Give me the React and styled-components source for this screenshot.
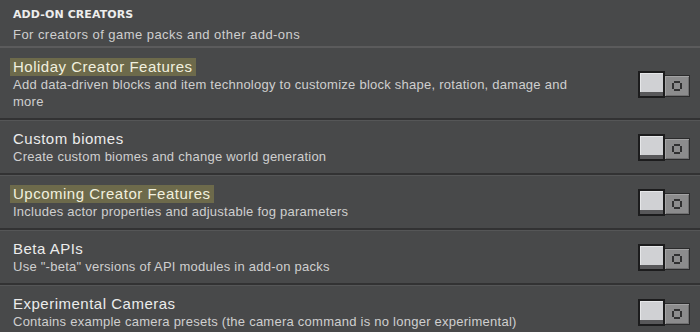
import React from "react";
import styled, { createGlobalStyle } from "styled-components";

const Global = createGlobalStyle`
  html, body { margin: 0; padding: 0; background: #48494a; }
  body { font-family: "Liberation Sans", Arial, sans-serif; }
`;

const Page = styled.div`
  width: 700px;
  height: 332px;
  overflow: hidden;
  background: #48494a;
  color: #e4e4e4;
`;

const Header = styled.header`
  padding: 6px 13px 3px;
  border-bottom: 2px solid #5b5b5c;
`;

const SectionTitle = styled.h2`
  margin: 0;
  font-family: "DejaVu Sans", sans-serif;
  font-weight: 700;
  font-size: 11px;
  letter-spacing: 0.1px;
  line-height: 17px;
  color: #ededed;
`;

const SectionSub = styled.p`
  margin: 3px 0 0;
  font-size: 13px;
  letter-spacing: 0.45px;
  line-height: 17px;
  color: #cfcfcf;
`;

const Row = styled.div`
  display: flex;
  align-items: center;
  padding: 10px 10px 8px 13px;
  border-top: ${(p) => (p.$first ? "none" : "2px solid #323233")};
  box-shadow: ${(p) => (p.$first ? "none" : "inset 0 1px 0 #555657")};
`;

const Text = styled.div`
  flex: 1;
  min-width: 0;
  padding-right: 42px;
`;

const Title = styled.span`
  display: inline-block;
  font-size: 15px;
  letter-spacing: 0.5px;
  line-height: 18px;
  color: ${(p) => (p.$hl ? "#f1f0df" : "#ececec")};
  background: ${(p) => (p.$hl ? "#6d6a4b" : "transparent")};
  margin-left: ${(p) => (p.$hl ? "-3px" : "0")};
  padding: ${(p) => (p.$hl ? "0 3px" : "0")};
`;

const Desc = styled.p`
  margin: 0;
  font-size: 13px;
  letter-spacing: 0.25px;
  line-height: 17px;
  color: #cfcfcf;
`;

const Toggle = styled.div`
  display: flex;
  align-items: flex-end;
  flex-shrink: 0;
`;

const Knob = styled.div`
  width: 23px;
  height: 23px;
  border: 2px solid #1c1c1d;
  background: #d0d1d4;
  box-shadow: inset 0 -4px 0 #58585a, inset 1px 1px 0 #e6e7e9;
`;

const Track = styled.div`
  width: 24px;
  height: 20px;
  border: 1px solid #2b2b2c;
  border-left: none;
  background: #8c8c8d;
  box-shadow: inset 1px 1px 0 #a3a3a4, inset -1px -1px 0 #6f6f70;
  display: flex;
  align-items: center;
  justify-content: center;
  margin-bottom: 1px;
`;

function OIcon() {
  return (
    <svg width="10" height="10" viewBox="0 0 10 10" shapeRendering="crispEdges">
      <path d="M2 0h6v2H2zM2 8h6v2H2zM0 2h2v6H0zM8 2h2v6H8z" fill="#303031" />
    </svg>
  );
}

const rows = [
  {
    title: "Holiday Creator Features",
    hl: true,
    desc: "Add data-driven blocks and item technology to customize block shape, rotation, damage and more",
  },
  { title: "Custom biomes", desc: "Create custom biomes and change world generation" },
  { title: "Upcoming Creator Features", hl: true, desc: "Includes actor properties and adjustable fog parameters" },
  { title: "Beta APIs", desc: 'Use "-beta" versions of API modules in add-on packs' },
  {
    title: "Experimental Cameras",
    desc: "Contains example camera presets (the camera command is no longer experimental)",
  },
];

export default function App() {
  return (
    <Page>
      <Global />
      <Header>
        <SectionTitle>ADD-ON CREATORS</SectionTitle>
        <SectionSub>For creators of game packs and other add-ons</SectionSub>
      </Header>
      {rows.map((r, i) => (
        <Row key={r.title} $first={i === 0}>
          <Text>
            <Title $hl={r.hl}>{r.title}</Title>
            <Desc>{r.desc}</Desc>
          </Text>
          <Toggle>
            <Knob />
            <Track>
              <OIcon />
            </Track>
          </Toggle>
        </Row>
      ))}
    </Page>
  );
}
